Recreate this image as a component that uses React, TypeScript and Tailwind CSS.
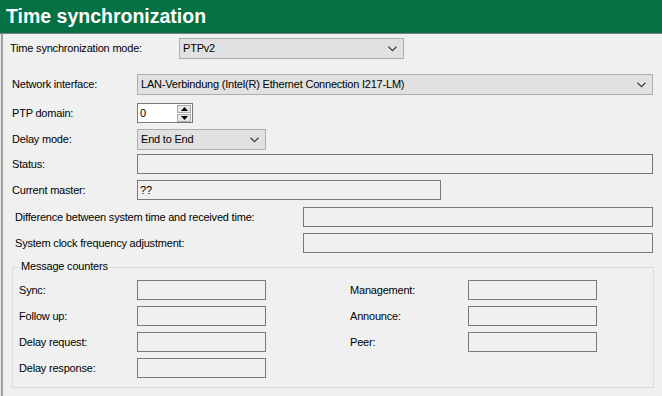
import React from 'react';

const font = { fontFamily: '"Liberation Sans", Arial, sans-serif' };

const Chevron: React.FC = () => (
  <svg width="9" height="6" viewBox="0 0 9 6" className="shrink-0">
    <polyline points="0.5,0.8 4.5,4.6 8.5,0.8" fill="none" stroke="#3c3c3c" strokeWidth="1.2" />
  </svg>
);

// Windows-style dropdown
const Combo: React.FC<{ value: string; className: string; padL?: string }> = ({ value, className, padL = 'pl-[3px]' }) => (
  <div className={`flex items-center justify-between bg-[#e1e1e1] border border-[#adadad] pr-[6px] ${padL} ${className}`}>
    <span className="text-[11px] leading-none text-black whitespace-nowrap">{value}</span>
    <Chevron />
  </div>
);

const Field: React.FC<{ className: string; value?: string }> = ({ className, value }) => (
  <div className={`flex items-center bg-[#f0f0f0] border border-[#7a7a7a] pl-[2px] ${className}`}>
    {value && <span className="text-[11px] leading-none text-black">{value}</span>}
  </div>
);

const Row: React.FC<{ label: string; labelClass: string; className?: string; children: React.ReactNode }> = ({
  label,
  labelClass,
  className = '',
  children,
}) => (
  <div className={`flex items-center ${className}`}>
    <div className={`shrink-0 text-[11px] leading-none text-black whitespace-nowrap ${labelClass}`}>{label}</div>
    {children}
  </div>
);

const SpinBox: React.FC = () => (
  <div className="flex items-center justify-between bg-white border border-[#7a7a7a] w-[56px] h-[20px] pl-[2px] pr-[1px]">
    <span className="text-[11px] leading-none text-black">0</span>
    <div className="flex flex-col gap-[1px]">
      <div className="w-[14px] h-[8px] bg-[#e6e6e6] border border-[#adadad] flex items-center justify-center">
        <svg width="7" height="4" viewBox="0 0 7 4"><polygon points="3.5,0 7,4 0,4" fill="#000" /></svg>
      </div>
      <div className="w-[14px] h-[8px] bg-[#e6e6e6] border border-[#adadad] flex items-center justify-center">
        <svg width="7" height="4" viewBox="0 0 7 4"><polygon points="0,0 7,0 3.5,4" fill="#000" /></svg>
      </div>
    </div>
  </div>
);

const counterLeft = ['Sync:', 'Follow up:', 'Delay request:', 'Delay response:'];
const counterRight = ['Management:', 'Announce:', 'Peer:'];

const CounterColumn: React.FC<{ labels: string[]; width: string }> = ({ labels, width }) => (
  <div className={`flex flex-col gap-[6px] ${width}`}>
    {labels.map(l => (
      <Row key={l} label={l} labelClass="w-[118px]">
        <Field className="w-[129px] h-[20px]" />
      </Row>
    ))}
  </div>
);

export default function App() {
  return (
    <div className="w-[662px] h-[396px] overflow-hidden bg-[#f0f0f0] flex flex-col tracking-[-0.2px]" style={font}>
      <div className="h-[34px] shrink-0 bg-[#037143] border-b border-[#7f7f7f] flex items-center pl-[6px] pt-[1px]">
        <h1 className="text-[19.5px] font-bold text-white leading-none tracking-normal">Time synchronization</h1>
      </div>

      <div className="flex-1 border-l border-[#e6e6e6]">
        <div className="h-full border-l-2 border-[#a0a0a0] flex flex-col">
          <Row label="Time synchronization mode:" labelClass="w-[176px] pl-[7px]" className="mt-[4px]">
            <Combo value="PTPv2" className="w-[225px] h-[21px]" />
          </Row>

          <Row label="Network interface:" labelClass="w-[134px] pl-[9px]" className="mt-[15px]">
            <Combo value="LAN-Verbindung (Intel(R) Ethernet Connection I217-LM)" className="w-[516px] h-[21px]" />
          </Row>

          <Row label="PTP domain:" labelClass="w-[134px] pl-[9px]" className="mt-[8px]">
            <SpinBox />
          </Row>

          <Row label="Delay mode:" labelClass="w-[134px] pl-[9px]" className="mt-[6px]">
            <Combo value="End to End" className="w-[129px] h-[21px]" />
          </Row>

          <Row label="Status:" labelClass="w-[134px] pl-[9px]" className="mt-[4px]">
            <Field className="w-[516px] h-[20px]" />
          </Row>

          <Row label="Current master:" labelClass="w-[134px] pl-[9px]" className="mt-[6px]">
            <Field className="w-[304px] h-[20px]" value="??" />
          </Row>

          <Row label="Difference between system time and received time:" labelClass="w-[300px] pl-[12px]" className="mt-[7px]">
            <Field className="w-[350px] h-[20px]" />
          </Row>

          <Row label="System clock frequency adjustment:" labelClass="w-[300px] pl-[12px]" className="mt-[6px]">
            <Field className="w-[350px] h-[20px]" />
          </Row>

          <div className="relative mt-[14px] ml-[9px] w-[642px] h-[121px] border border-[#dcdcdc]">
            <span className="absolute left-[6px] top-[-7px] bg-[#f0f0f0] px-[2px] text-[11px] leading-none text-black">
              Message counters
            </span>
            <div className="flex pt-[12px] pl-[6px]">
              <CounterColumn labels={counterLeft} width="w-[331px]" />
              <CounterColumn labels={counterRight} width="w-[250px]" />
            </div>
          </div>
        </div>
      </div>
    </div>
  );
}
